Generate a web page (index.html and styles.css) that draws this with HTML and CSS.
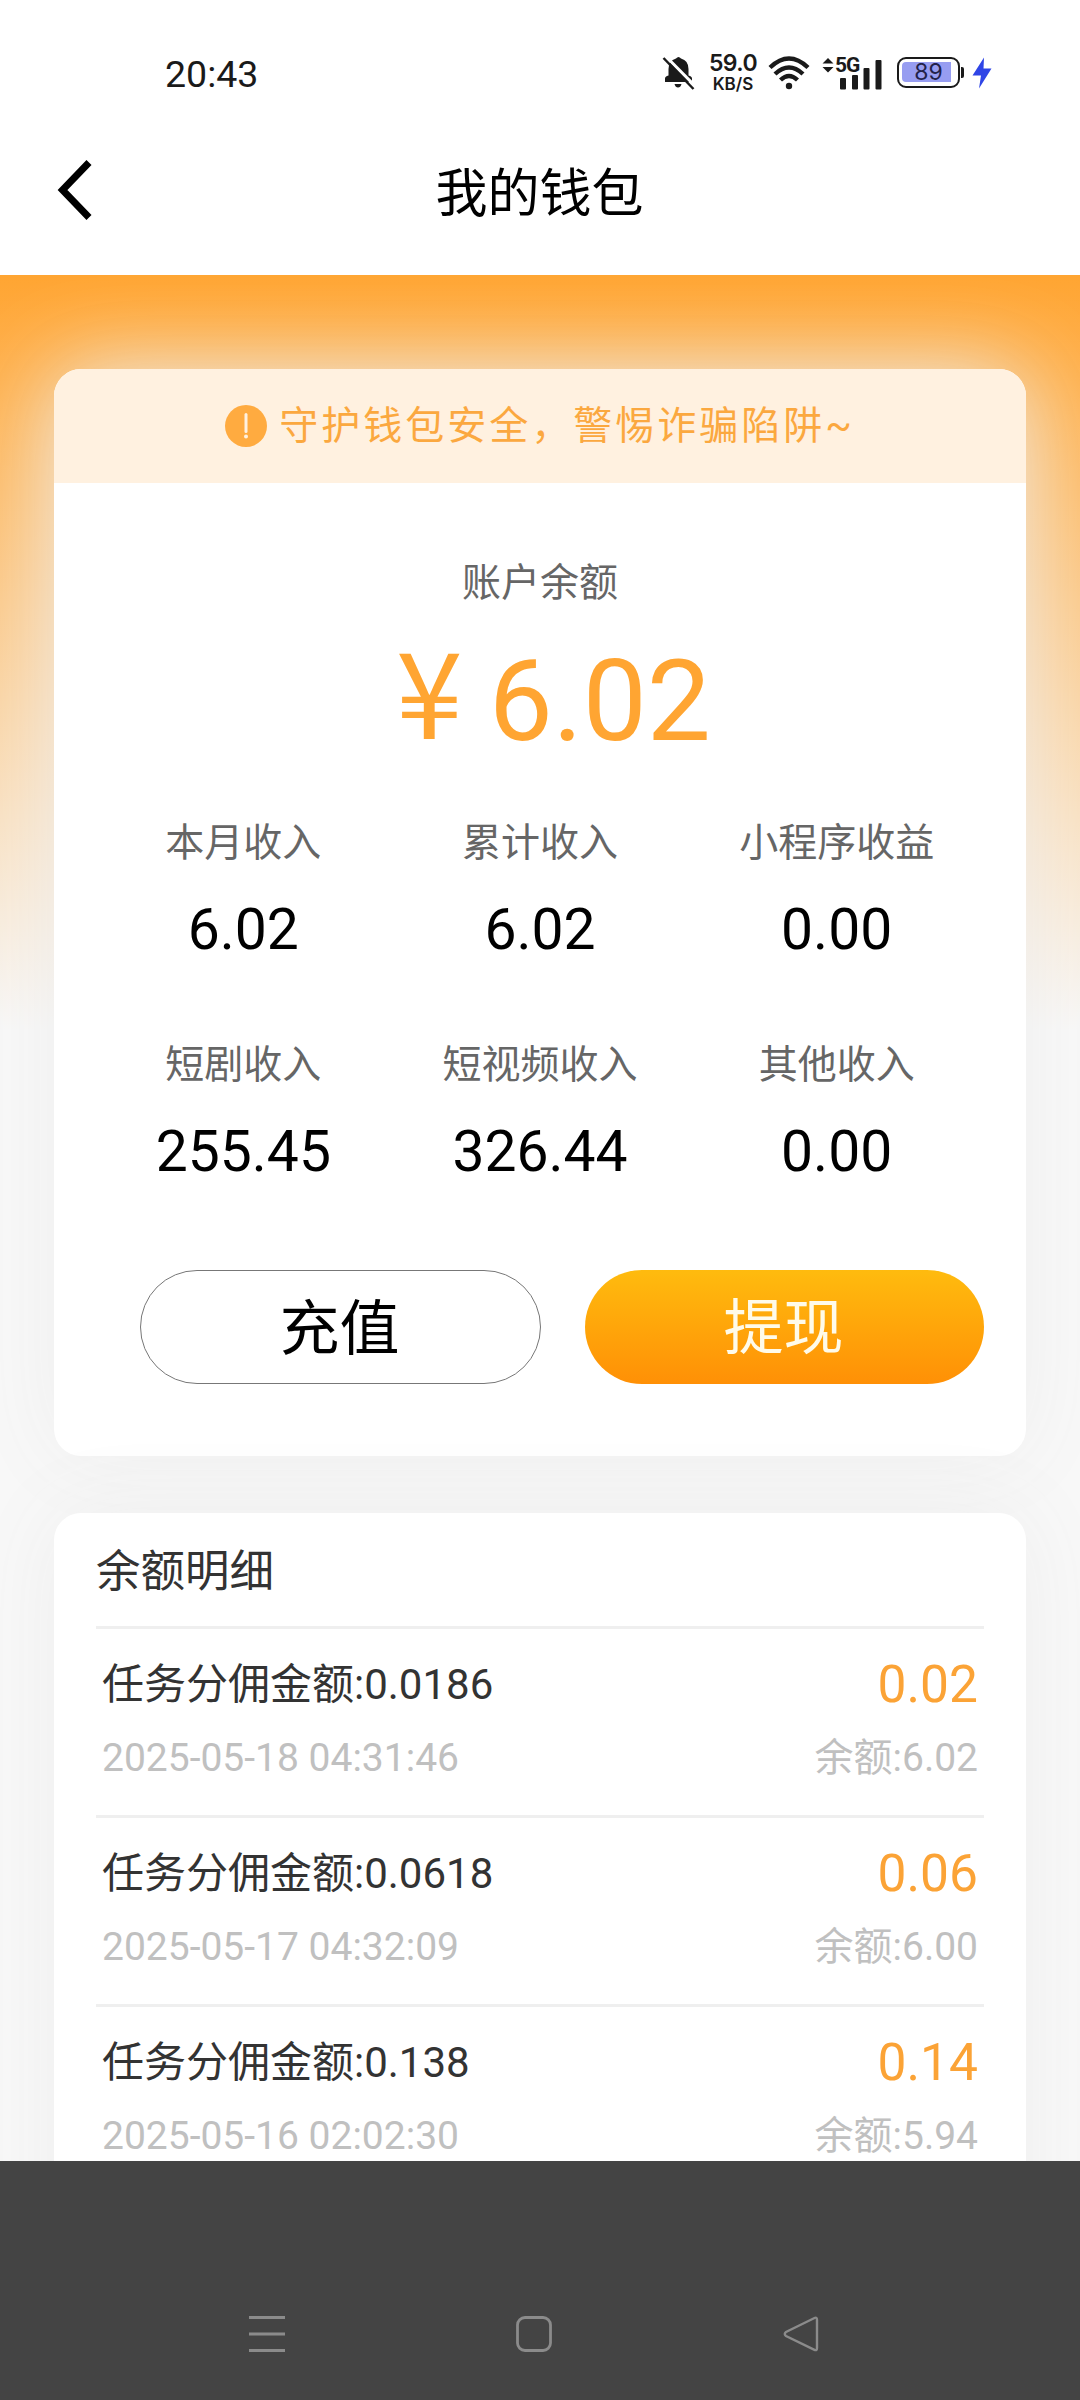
FILE: index.html
```html
<!DOCTYPE html>
<html lang="zh-CN">
<head>
<meta charset="utf-8">
<title>我的钱包</title>
<link rel="stylesheet" href="styles.css">
</head>
<body>
<div class="screen">
  <header class="status">
    <span class="time">20:43</span>
    <div class="status-icons">
      <svg class="bell" width="34" height="36" viewBox="0 0 34 36"><path d="M3 27v-3.500q0-2 3.500-3V14q0-8.500 7.500-10.500 2.500-3 5 0 7.500 2 7.500 10.500v6.500q3.500 1 3.500 3V27z" fill="#1a1a1a"/><path d="M12.500 29h7q-1 3.500-3.500 3.500t-3.500-3.500z" fill="#1a1a1a"/><path d="M4.500 2L34 32" stroke="#fff" stroke-width="3"/><path d="M1.500 3L31.500 34" stroke="#1a1a1a" stroke-width="2.500"/></svg>
      <div class="speed"><b>59.0</b><span>KB/S</span></div>
      <svg class="wifi" width="42" height="34" viewBox="0 0 42 34"><g fill="none" stroke="#1a1a1a" stroke-width="4.400"><path d="M2 11.500Q21-6.500 40 11.500"/><path d="M7 18Q21 5 35 18"/><path d="M12.500 24Q21 16 29.500 24"/></g><circle cx="21" cy="30" r="3.200" fill="#1a1a1a"/></svg>
      <div class="cell">
        <svg width="60" height="34" viewBox="0 0 60 34"><g fill="#1a1a1a"><path d="M.5 7.500L6 2l5.500 5.500zM.5 11L6 16.500 11.500 11z"/><rect x="18" y="22" width="6" height="11.500" rx="1"/><rect x="30" y="19" width="6" height="14.500" rx="1"/><rect x="41.500" y="12" width="6" height="21.500" rx="1"/><rect x="53.500" y="4" width="6" height="29.500" rx="1"/></g></svg>
        <span class="net">5G</span>
      </div>
      <div class="battery"><span>89</span></div>
      <i class="nub"></i>
      <svg class="bolt" width="20" height="32" viewBox="0 0 20 32"><path d="M12 .5L.5 18.500H9L7 31.500 19.500 11.500H11.500z" fill="#2f45e6"/></svg>
    </div>
  </header>
  <nav class="titlebar">
    <svg class="back" width="40" height="64" viewBox="0 0 40 64"><path d="M36 4.500L9.500 32 36 59.500" fill="none" stroke="#000" stroke-width="7"/></svg>
    <h1>我的钱包</h1>
  </nav>
  <main class="content">
    <section class="card wallet">
      <div class="notice">
        <svg width="42" height="42" viewBox="0 0 42 42"><circle cx="21" cy="21" r="21" fill="#ffab40"/><path d="M21 9.500v17" stroke="#fff1e0" stroke-width="3" stroke-linecap="round"/><circle cx="21" cy="31.500" r="2" fill="#fff1e0"/></svg>
        <span>守护钱包安全，警惕诈骗陷阱~</span>
      </div>
      <div class="label">账户余额</div>
      <div class="balance"><span class="yen">¥</span><span>6.02</span></div>
      <div class="stats">
        <div><div class="label">本月收入</div><div class="num">6.02</div></div>
        <div><div class="label">累计收入</div><div class="num">6.02</div></div>
        <div><div class="label">小程序收益</div><div class="num">0.00</div></div>
        <div><div class="label">短剧收入</div><div class="num">255.45</div></div>
        <div><div class="label">短视频收入</div><div class="num">326.44</div></div>
        <div><div class="label">其他收入</div><div class="num">0.00</div></div>
      </div>
      <div class="actions">
        <button class="btn outline">充值</button>
        <button class="btn solid">提现</button>
      </div>
    </section>
    <section class="card details">
      <h2>余额明细</h2>
      <div class="item">
        <div class="line main"><span>任务分佣金额:0.0186</span><span class="amount">0.02</span></div>
        <div class="line sub"><span>2025-05-18 04:31:46</span><span>余额:6.02</span></div>
      </div>
      <div class="item">
        <div class="line main"><span>任务分佣金额:0.0618</span><span class="amount">0.06</span></div>
        <div class="line sub"><span>2025-05-17 04:32:09</span><span>余额:6.00</span></div>
      </div>
      <div class="item">
        <div class="line main"><span>任务分佣金额:0.138</span><span class="amount">0.14</span></div>
        <div class="line sub"><span>2025-05-16 02:02:30</span><span>余额:5.94</span></div>
      </div>
    </section>
  </main>
  <footer class="navbar">
    <svg width="36" height="36" viewBox="0 0 36 36"><path d="M0 1.500h36M0 18h36M0 34.500h36" stroke="#8b8b8b" stroke-width="3"/></svg>
    <svg width="36" height="36" viewBox="0 0 36 36"><rect x="1.500" y="1.500" width="33" height="33" rx="7.500" fill="none" stroke="#8b8b8b" stroke-width="2.800"/></svg>
    <svg width="36" height="36" viewBox="0 0 36 36"><path d="M31.500 2Q34 .8 34 4V32Q34 35 31.500 33.800L3 20Q.5 18 3 16z" fill="none" stroke="#8b8b8b" stroke-width="2.400"/></svg>
  </footer>
</div>
</body>
</html>
```
FILE: styles.css
```css
* { box-sizing: border-box; }
body { margin: 0; background: #fff; font-family: Roboto, "Noto Sans CJK SC", sans-serif; }
h1, h2 { margin: 0; font-weight: 400; }
svg { display: block; flex: none; }

.screen { width: 1080px; height: 2400px; overflow: hidden; display: flex; flex-direction: column; }

.status { height: 110px; padding: 36px 88px 0 165px; display: flex; justify-content: space-between; color: #1a1a1a; }
.time { font-size: 37.500px; line-height: 76px; height: 76px; }
.status-icons { display: flex; align-items: center; height: 73px; }
.speed { width: 50px; margin-left: 12px; display: flex; flex-direction: column; align-items: center; font-family: Inter, sans-serif; }
.speed b { font-size: 23px; line-height: 22px; font-weight: 600; letter-spacing: -0.6px; }
.speed span { font-size: 17px; line-height: 18px; margin-top: 1px; font-weight: 600; }
.wifi { margin-left: 10px; }
.cell { position: relative; margin-left: 12px; }
.net { position: absolute; left: 13px; top: -2px; padding-bottom: 1px; font-size: 21px; line-height: 22px; font-weight: 700; background: linear-gradient(#fff, #fff) 0 0 / 24px 20px no-repeat; letter-spacing: -1px; }
.battery { width: 63px; height: 31px; margin-left: 15px; border: 2.500px solid #1a1a1a; border-radius: 9px; padding: 3px 7px 3px 3px; }
.battery span { display: block; height: 20px; border-radius: 4px 0 0 4px; background: #979df1; font: 23px/21px Inter, sans-serif; padding-left: 4px; text-align: center; color: #22224a; }
.nub { width: 3px; height: 11px; margin: 0 8px 0 1px; background: #1a1a1a; border-radius: 0 2px 2px 0; }

.titlebar { height: 165px; display: grid; grid-template-columns: 95px 1fr 95px; align-items: center; }
.back { margin: -6px 0 0 53px; }
.titlebar h1 { font-size: 52px; line-height: 60px; text-align: center; padding: 4px 1px 0 0; }

.content { height: 1886px; overflow: hidden; padding: 94px 54px 0; background: linear-gradient(#ffa532, #f8f8f8 755px); }
.card { border-radius: 27px; background: #fff; box-shadow: 0 0 90px #eee; }
.wallet { height: 1087px; }
.notice { height: 114px; border-radius: 27px 27px 0 0; background: #fff1e0; display: flex; align-items: center; justify-content: center; gap: 12px; color: #fba83f; font-size: 39px; line-height: 56px; letter-spacing: 3px; margin-bottom: 72px; }
.label { font-size: 39px; line-height: 56px; text-align: center; color: #666; }
.balance { height: 120px; margin-top: 30px; display: flex; justify-content: center; gap: 26px; padding-left: 27px; font-size: 114px; line-height: 120px; color: #ffa532; }
.yen { font: 120px/92px "Noto Sans CJK SC", sans-serif; }
.stats { margin: 54px 41px 0; display: grid; grid-template-columns: repeat(3, 1fr); row-gap: 72px; }
.num { margin-top: 24px; font-size: 57px; line-height: 70px; text-align: center; color: #000; }
.actions { margin-top: 83px; padding: 0 42px 0 86px; display: flex; gap: 44px; }
.btn { flex: 1 1 0; min-width: 0; height: 114px; border-radius: 57px; font: 60px/110px Roboto, "Noto Sans CJK SC", sans-serif; padding: 4px 2px 0 0; }
.outline { background: #fff; border: 1.500px solid #777; color: #000; }
.solid { border: 0; background: linear-gradient(#ffbb0e, #ff9006); color: #fffbea; }

.details { margin-top: 57px; height: 900px; padding: 0 42px; color: #333; }
.details h2 { height: 113px; line-height: 119px; font-size: 44.500px; }
.item { height: 189px; border-top: 3px solid #efefef; padding: 21px 6px 0; }
.line { display: flex; justify-content: space-between; line-height: 70px; }
.main { height: 70px; font-size: 42px; }
.amount { font-size: 51.500px; color: #fba336; }
.sub { height: 70px; margin-top: 3px; font-size: 39px; color: #c0c0c0; }

.navbar { height: 239px; background: #444; padding: 155px 261px 0 249px; display: flex; justify-content: space-between; }
```
